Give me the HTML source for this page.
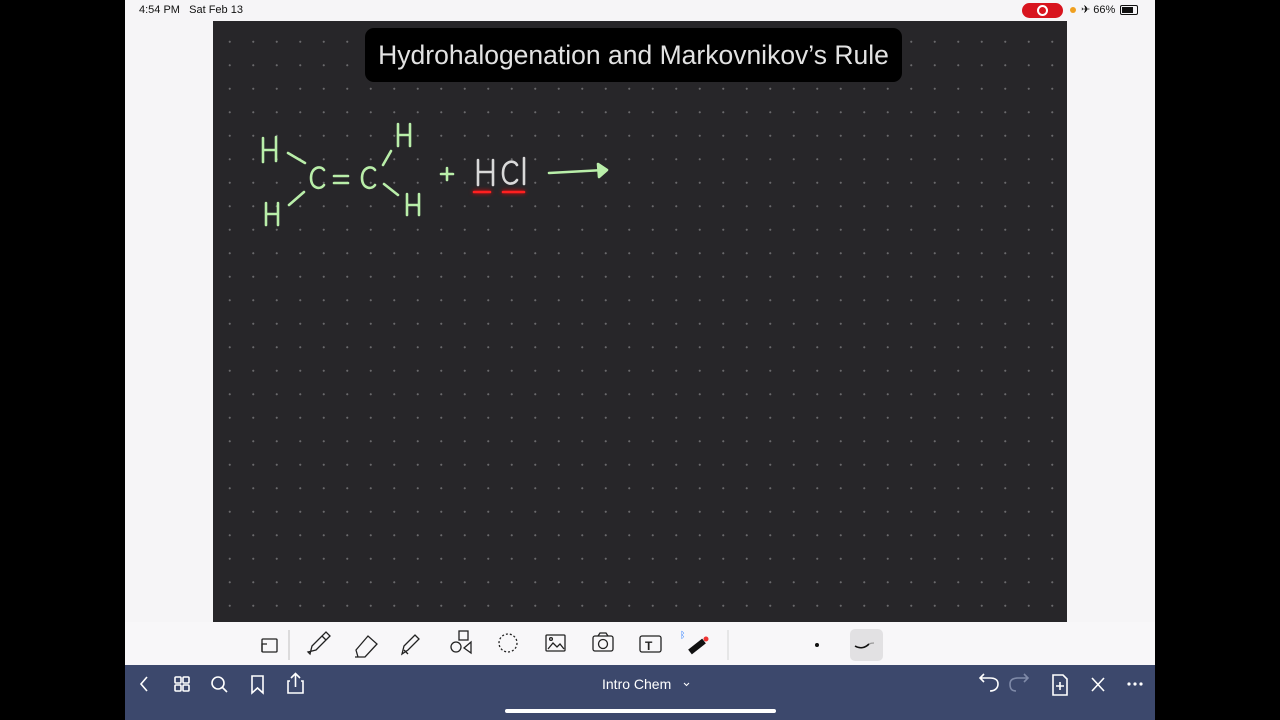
<!DOCTYPE html><html><head><style>
body{margin:0;width:1280px;height:720px;background:#000;position:relative;overflow:hidden;font-family:"Liberation Sans",sans-serif}
#w{position:absolute;left:125px;top:0;width:1030px;height:720px;background:#f6f5f7}
#cv{position:absolute;left:213px;top:21px;width:854px;height:601px;background-color:#272629;background-image:radial-gradient(circle,#6a696c 0.9px,transparent 1.2px);background-size:23.5px 23.5px;background-position:5px 9px}
#title{position:absolute;left:365px;top:28px;width:537px;height:54px;background:#000;border-radius:9px;color:#e2e2e2;font-size:26.5px;line-height:54px;text-align:center;white-space:nowrap}
#tb{position:absolute;left:125px;top:622px;width:1030px;height:43px;background:#f8f7f9}
#nav{position:absolute;left:125px;top:665px;width:1030px;height:55px;background:#3c486c}
.st{position:absolute;top:4px;font-size:11px;color:#111}
</style></head><body>
<div id="w"></div>
<div class="st" style="left:139px">4:54 PM&nbsp;&nbsp;&nbsp;Sat Feb 13</div>
<div style="position:absolute;left:1022px;top:3px;width:41px;height:15px;background:#d8141e;border-radius:8px"></div>
<div style="position:absolute;left:1037px;top:5px;width:7px;height:7px;border:2px solid #fff;border-radius:50%"></div>
<div style="position:absolute;left:1070px;top:7px;width:6px;height:6px;background:#f0a020;border-radius:50%"></div>
<div class="st" style="left:1081px;top:3px">✈ 66%</div>
<div style="position:absolute;left:1120px;top:5px;width:16px;height:8px;border:1px solid #111;border-radius:2px"><div style="width:11px;height:6px;margin:1px;background:#111"></div></div>
<div id="cv"></div>
<div id="title">Hydrohalogenation and Markovnikov’s Rule</div>
<svg style="position:absolute;left:0;top:0" width="1280" height="720" fill="none" stroke-linecap="round" stroke-linejoin="round">
<g stroke="#b9eea9" stroke-width="2.6">
<path d="M263 138v24M276 137v24M263 150h13"/>
<path d="M288 153l17 10"/>
<path d="M324 170c-3-5-13-3-13 8s10 12 13 7"/>
<path d="M334 176h14M334 183h14"/>
<path d="M375 170c-3-5-13-3-13 8s10 12 13 7"/>
<path d="M398 124v22M410 124v22M398 135h12"/>
<path d="M383 165l8-14"/>
<path d="M384 184l14 11"/>
<path d="M407 194v21M419 194v21M407 205h12"/>
<path d="M266 203v22M278 203v22M266 214h12"/>
<path d="M289 205l15-13"/>
<path d="M441 174h12M447 168v12"/>
<path d="M549 173l55-3M598 164l9 6-8 7z" fill="#b9eea9"/>
</g>
<g stroke="#d9d9d9" stroke-width="2.6"><path d="M478 160v25M493 160v25M478 172h15"/><path d="M517 165c-3-6-14-4-14 8s10 13 14 7"/><path d="M524 158v26"/></g>
<g stroke="#ff2020" stroke-width="2.6" style="filter:drop-shadow(0 0 2px #f00)"><path d="M474 192h16M503 192h21"/></g>
</svg>
<div id="tb"></div>
<svg style="position:absolute;left:0;top:622px" width="1280" height="43" fill="none" stroke="#222" stroke-width="1.3">
<rect x="262" y="17" width="15" height="13" rx="1"/><path d="M267 22h-5v8"/>
<path d="M289 8v30" stroke="#ccc"/>
<path d="M310 32l2-8 14-14 4 4-14 14-8 2zM322 14l4 4"/>
<path d="M356 28l12-14 9 8-12 13h-7zM355 35h10"/>
<path d="M402 32l2-8 11-11 4 4-11 11zM404 28l4 4"/>
<rect x="459" y="9" width="9" height="9"/><circle cx="456" cy="25" r="5"/><path d="M471 20v11l-7-5z"/>
<circle cx="508" cy="21" r="9" stroke-dasharray="2 2"/>
<rect x="546" y="13" width="19" height="16" rx="1"/><path d="M548 27l5-6 4 4 3-3 4 5"/><circle cx="551" cy="17" r="1.4"/>
<rect x="593" y="14" width="20" height="15" rx="2"/><circle cx="603" cy="22" r="4.5"/><path d="M598 14l2-3h6l2 3"/>
<rect x="640" y="14" width="21" height="16" rx="2"/><text x="645" y="28" font-size="12" font-family="Liberation Sans" fill="#222" stroke="none" font-weight="bold">T</text>
<path d="M690 30l14-11" stroke="#111" stroke-width="6"/><circle cx="706" cy="17" r="2.5" fill="#e33" stroke="none"/><text x="680" y="16" font-size="9" fill="#27f" stroke="none">ᛒ</text>
<path d="M728 8v30" stroke="#ddd"/>
<circle cx="817" cy="23" r="2" fill="#111" stroke="none"/>
<rect x="850" y="7" width="33" height="32" rx="5" fill="#e2e1e3" stroke="none"/>
<path d="M855 24c5 3 10 2 14-2" stroke="#111" stroke-width="1.6"/><path d="M869 22c2-1 4-1 5-1" stroke="#999"/>
</svg>
<div id="nav"></div>
<svg style="position:absolute;left:0;top:665px" width="1280" height="55" fill="none" stroke="#fff" stroke-width="1.6">
<path d="M147 12l-6 7 6 7"/>
<rect x="175" y="12" width="6" height="6" rx="1"/><rect x="183" y="12" width="6" height="6" rx="1"/><rect x="175" y="20" width="6" height="6" rx="1"/><rect x="183" y="20" width="6" height="6" rx="1"/>
<circle cx="218" cy="18" r="6"/><path d="M222 22l5 5"/>
<path d="M252 11h11v17l-5.5-5-5.5 5z"/>
<path d="M290 16h-2v12h15v-12h-2M295.5 22v-13M291 13l4.5-4.5 4.5 4.5"/>
<path d="M990 26c5 0 8-3 8-7s-3-6-8-6h-10M984 9l-4 4 4 4"/>
<path d="M1016 26c-5 0-6-3-6-7s3-6 8-6h10M1024 9l4 4-4 4" stroke="#7f8aa8"/>
<path d="M1053 10h10l4 4v16h-14zM1060 17v8M1056 21h8"/>
<path d="M1092 13l12 13M1104 13l-12 13"/>
<g fill="#fff" stroke="none"><circle cx="1129" cy="19" r="1.6"/><circle cx="1135" cy="19" r="1.6"/><circle cx="1141" cy="19" r="1.6"/></g>
<path d="M684 18l2.5 2.5 2.5-2.5" stroke-width="1.1"/>
<rect x="505" y="44" width="271" height="4" rx="2" fill="#fff" stroke="none"/>
</svg>
<div style="position:absolute;left:602px;top:676px;color:#fff;font-size:14px">Intro Chem</div>
</body></html>
